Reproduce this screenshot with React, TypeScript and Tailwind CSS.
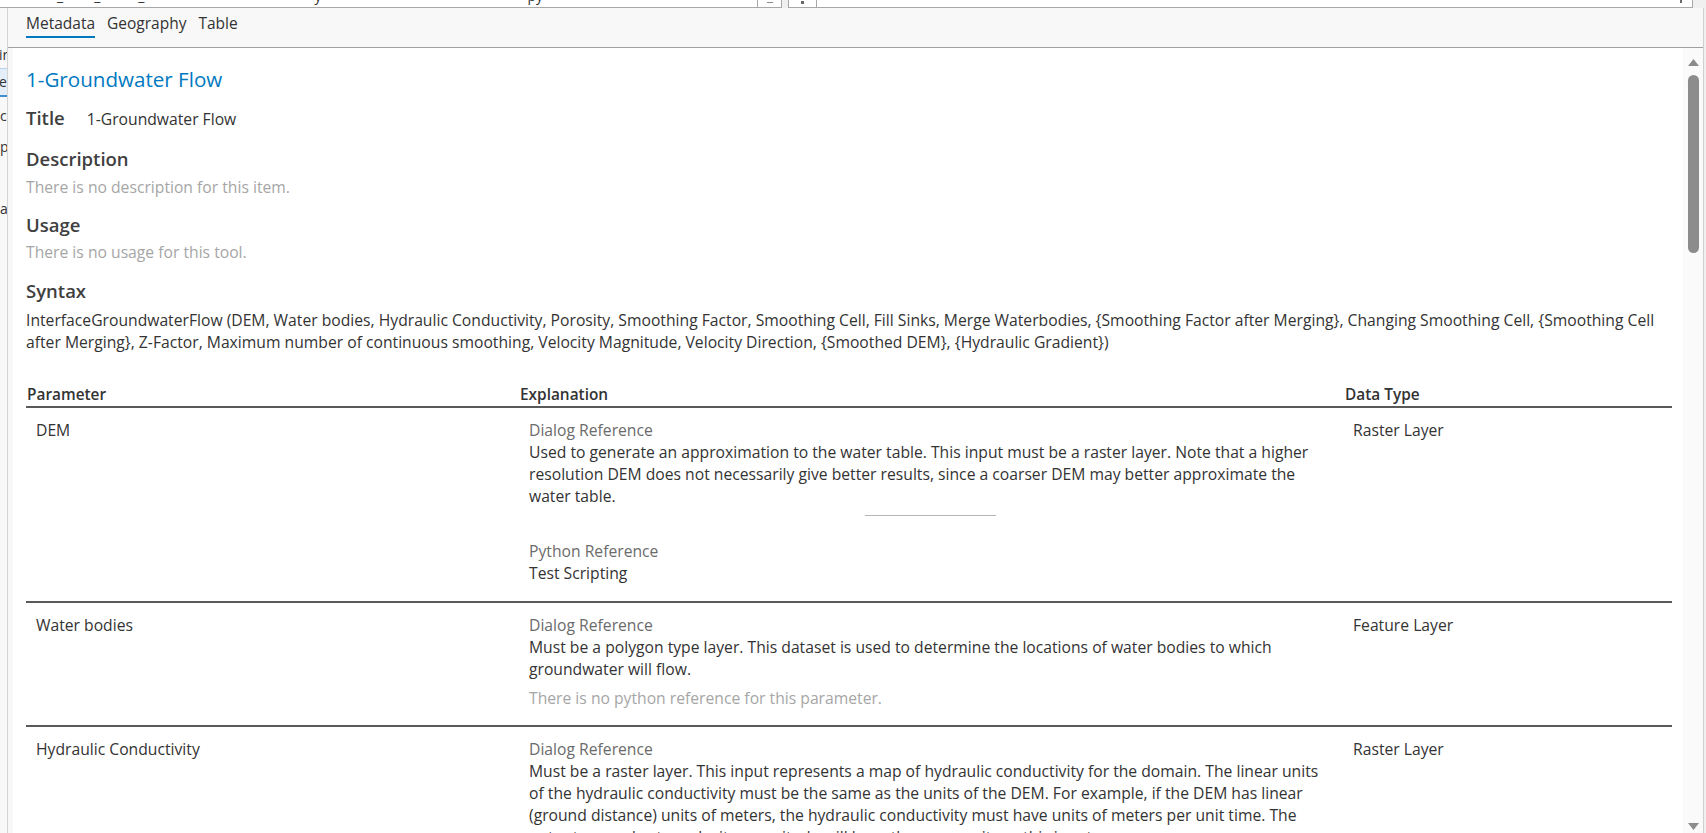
import React from "react";

const FONT = "font-['Open_Sans','Noto_Sans',sans-serif]";

function Line({ children }: { children: React.ReactNode }) {
  return <div className="whitespace-nowrap leading-[22px]">{children}</div>;
}

function Row({
  param,
  type,
  children,
}: {
  param: string;
  type: string;
  children: React.ReactNode;
}) {
  return (
    <div className="grid grid-cols-[494px_825px_1fr] border-b-2 border-[#5a5a5a] pt-[11px] pb-[16px] text-[15.7px] text-[#333]">
      <div className="pl-[10px] leading-[22px]">{param}</div>
      <div className="pl-[9px] pr-[9px]">{children}</div>
      <div className="pl-[8px] leading-[22px]">{type}</div>
    </div>
  );
}

function Label({ children }: { children: React.ReactNode }) {
  return <div className="leading-[22px] text-[#6b6b6b]">{children}</div>;
}

export default function App() {
  return (
    <div
      className={`w-[1706px] h-[833px] overflow-hidden bg-[#f0f0f0] text-[#333] flex flex-col ${FONT}`}
    >
      {/* top strip */}
      <div className="h-[8px] shrink-0 flex">
        <div className="w-[758px] h-[8px] bg-white border-b border-r border-[#a8a8a8] overflow-hidden">
          <div className="-mt-[14px] flex text-[14px] leading-[20px] text-[#333] whitespace-nowrap">
            <span className="ml-[57px]">_</span>
            <span className="ml-[31px]">_</span>
            <span className="ml-[38px]">_</span>
            <span className="ml-[170px]">y</span>
            <span className="ml-[206px]">py</span>
          </div>
        </div>
        <div className="w-[24px] h-[8px] bg-white border-b border-r border-[#a8a8a8] flex justify-center">
          <div className="w-[6px] h-[1px] bg-[#8a8a8a] mt-[2px]" />
        </div>
        <div className="w-[6px]" />
        <div className="w-[29px] h-[8px] bg-white border-b border-l border-r border-[#a8a8a8] flex justify-center">
          <div className="w-[3px] h-[3px] bg-[#6a6a6a] mt-[1px]" />
        </div>
        <div className="w-[876px] h-[8px] bg-white border-b border-r border-[#a8a8a8] flex justify-end">
          <div className="w-[2px] h-[3px] bg-[#6a6a6a] mr-[10px]" />
        </div>
      </div>

      <div className="flex flex-1 min-h-0">
        {/* left clipped tree */}
        <div className="w-[8px] shrink-0 bg-[#f8f8f8] border-r border-[#d4d4d4] overflow-hidden text-[14px] text-[#333]">
          <div className="h-[37px]" />
          <div className="leading-[20px] -ml-[1px]">ir</div>
          <div className="mt-[3px] h-[29px] bg-[#e3eef8] border-t border-[#b9d4ec] border-b-2 border-b-[#3a8fd0] leading-[26px] -ml-[1px]">
            e
          </div>
          <div className="mt-[9px] leading-[20px]">c</div>
          <div className="mt-[11px] leading-[20px]">p</div>
          <div className="mt-[42px] leading-[20px]">a</div>
        </div>

        {/* main panel */}
        <div className="w-[1696px] shrink-0 flex flex-col bg-[#f8f8f8] border-r border-[#cfcfcf]">
          {/* tabs */}
          <div className="h-[40px] shrink-0 border-b border-[#a0a0a0] flex pl-[18px] gap-[12px] text-[15.5px] text-[#333]">
            <div className="flex flex-col pt-[4px]">
              <div className="leading-[22px]">Metadata</div>
              <div className="mt-[2px] h-[2px] bg-[#0079c1]" />
            </div>
            <div className="flex flex-col pt-[4px]">
              <div className="leading-[22px]">Geography</div>
            </div>
            <div className="flex flex-col pt-[4px]">
              <div className="leading-[22px]">Table</div>
            </div>
          </div>

          <div className="flex flex-1 min-h-0">
            <div className="w-[5px] shrink-0" />
            {/* white content */}
            <div className="w-[1670px] shrink-0 bg-white overflow-hidden pl-[13px] pr-[11px] pt-[17px]">
              <h1 className="text-[20.6px] leading-[28px] text-[#0079c1]">1-Groundwater Flow</h1>

              <div className="mt-[12px] flex items-baseline">
                <div className="text-[18.5px] leading-[26px] font-semibold text-[#404040]">Title</div>
                <div className="ml-[22px] text-[15.7px] text-[#333]">1-Groundwater Flow</div>
              </div>

              <div className="mt-[14px] text-[18.5px] leading-[26px] font-semibold text-[#404040]">
                Description
              </div>
              <div className="mt-[4px] text-[15.7px] leading-[22px] text-[#a6a6a6]">
                There is no description for this item.
              </div>

              <div className="mt-[14px] text-[18.5px] leading-[26px] font-semibold text-[#404040]">
                Usage
              </div>
              <div className="mt-[3px] text-[15.7px] leading-[22px] text-[#a6a6a6]">
                There is no usage for this tool.
              </div>

              <div className="mt-[15px] text-[18.5px] leading-[26px] font-semibold text-[#404040]">
                Syntax
              </div>
              <div className="mt-[5px] text-[15.7px] text-[#333]">
                <Line>
                  InterfaceGroundwaterFlow (DEM, Water bodies, Hydraulic Conductivity, Porosity, Smoothing Factor,
                  Smoothing Cell, Fill Sinks, Merge Waterbodies, {"{"}Smoothing Factor after Merging{"}"}, Changing
                  Smoothing Cell, {"{"}Smoothing Cell
                </Line>
                <Line>
                  after Merging{"}"}, Z-Factor, Maximum number of continuous smoothing, Velocity Magnitude, Velocity
                  Direction, {"{"}Smoothed DEM{"}"}, {"{"}Hydraulic Gradient{"}"})
                </Line>
              </div>

              {/* table */}
              <div className="mt-[31px]">
                <div className="grid grid-cols-[494px_825px_1fr] border-b-2 border-[#5a5a5a] text-[15.4px] font-semibold text-[#333] leading-[22px]">
                  <div className="pl-[1px]">Parameter</div>
                  <div>Explanation</div>
                  <div>Data Type</div>
                </div>

                <Row param="DEM" type="Raster Layer">
                  <Label>Dialog Reference</Label>
                  <Line>
                    Used to generate an approximation to the water table. This input must be a raster layer. Note that a
                    higher
                  </Line>
                  <Line>
                    resolution DEM does not necessarily give better results, since a coarser DEM may better approximate
                    the
                  </Line>
                  <Line>water table.</Line>
                  <div className="mt-[8px] flex justify-center">
                    <div className="w-[131px] h-[1px] bg-[#b5b5b5] mr-[5px]" />
                  </div>
                  <div className="mt-[24px] mb-[1px]">
                    <Label>Python Reference</Label>
                    <Line>Test Scripting</Line>
                  </div>
                </Row>

                <Row param="Water bodies" type="Feature Layer">
                  <Label>Dialog Reference</Label>
                  <Line>
                    Must be a polygon type layer. This dataset is used to determine the locations of water bodies to which
                  </Line>
                  <Line>groundwater will flow.</Line>
                  <div className="mt-[7px] leading-[22px] text-[#a6a6a6]">
                    There is no python reference for this parameter.
                  </div>
                </Row>

                <Row param="Hydraulic Conductivity" type="Raster Layer">
                  <Label>Dialog Reference</Label>
                  <Line>
                    Must be a raster layer. This input represents a map of hydraulic conductivity for the domain. The
                    linear units
                  </Line>
                  <Line>
                    of the hydraulic conductivity must be the same as the units of the DEM. For example, if the DEM has
                    linear
                  </Line>
                  <Line>
                    (ground distance) units of meters, the hydraulic conductivity must have units of meters per unit time.
                    The
                  </Line>
                  <Line>output groundwater velocity magnitude will have the same units as this input.</Line>
                </Row>
              </div>
            </div>

            {/* scrollbar */}
            <div className="w-[20px] shrink-0 bg-[#fafafa] flex flex-col items-center pt-[11px] pb-[3px]">
              <svg width="11" height="8" viewBox="0 0 11 8">
                <polygon points="5.5,0 11,7 0,7" fill="#8c8c8c" />
              </svg>
              <div className="mt-[8px] w-[11px] h-[178px] rounded-full bg-[#8c8c8c]" />
              <div className="mt-auto">
                <svg width="11" height="8" viewBox="0 0 11 8">
                  <polygon points="0,1 11,1 5.5,8" fill="#8c8c8c" />
                </svg>
              </div>
            </div>
          </div>
        </div>
      </div>
    </div>
  );
}
